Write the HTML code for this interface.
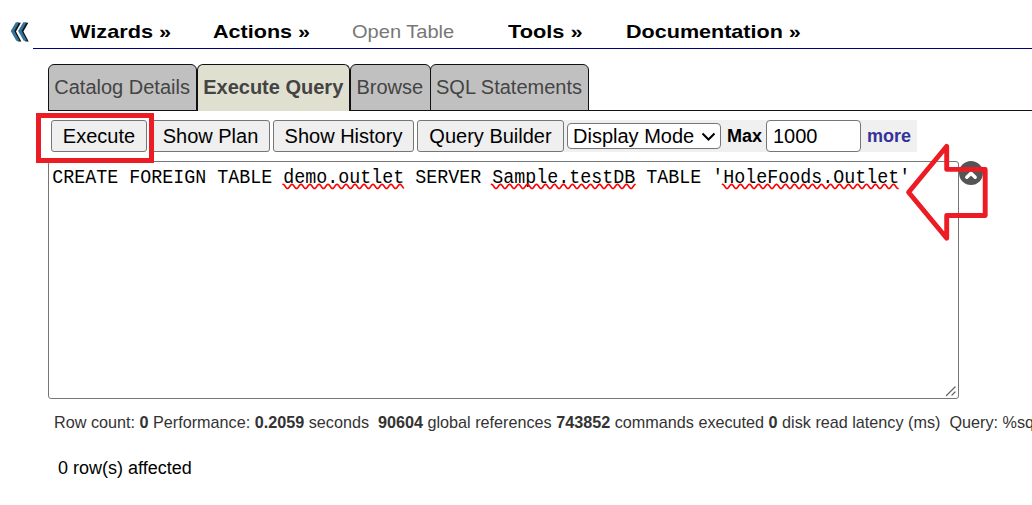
<!DOCTYPE html>
<html><head><meta charset="utf-8">
<style>
html,body{margin:0;padding:0;background:#fff;width:1032px;height:505px;overflow:hidden;position:relative;font-family:"Liberation Sans",sans-serif;}
.abs{position:absolute;}
.menu{position:absolute;top:18.7px;font-weight:bold;font-size:18.5px;color:#000;white-space:nowrap;transform-origin:0 0;line-height:26px;}
.menuline{position:absolute;left:33px;top:48px;width:999px;height:1px;background:#000080;}
.tab{position:absolute;top:64px;height:45px;border:1px solid #111;border-radius:6px 6px 0 0;background:#c0c0c0;color:#444;font-size:20px;line-height:45px;box-sizing:content-box;white-space:nowrap;}
.tabline{position:absolute;left:48px;top:110px;width:984px;height:1px;background:#111;}
.btn{position:absolute;top:120px;height:32px;box-sizing:border-box;border:1px solid #767676;border-radius:3px;background:#efefef;color:#000;font-size:20px;line-height:30px;white-space:nowrap;padding:0;text-align:center;}
.ta{position:absolute;left:48px;top:161px;width:909px;height:236px;border:1px solid #767676;border-radius:3px;background:#fff;}
.code{position:absolute;left:52.3px;top:167px;transform:scaleY(1.08);transform-origin:0 0;font-family:"Liberation Mono",monospace;font-size:18.333px;line-height:22px;color:#000;white-space:pre;}
.sp{text-decoration:underline wavy #e00;text-decoration-thickness:1px;text-underline-offset:3px;}
.stat{position:absolute;left:54px;top:413.3px;font-size:16.2px;color:#333;white-space:nowrap;line-height:18px;}
.stat b{color:#333;}
</style></head><body>
<!-- collapse icon -->
<svg class="abs" style="left:0;top:0" width="40" height="50" viewBox="0 0 40 50">
  <g fill="#111">
    <polygon points="17.6,22.8 20.9,22.8 16.0,31.6 21.3,41.4 18.0,41.4 12.4,31.6"/>
    <polygon points="25.0,22.8 28.3,22.8 23.4,31.6 28.7,41.4 25.4,41.4 19.8,31.6"/>
  </g>
  <g fill="#35739c">
    <polygon points="15.9,22.2 19.2,22.2 14.3,31.0 19.6,40.8 16.3,40.8 10.7,31.0"/>
    <polygon points="23.3,22.2 26.6,22.2 21.7,31.0 27.0,40.8 23.7,40.8 18.1,31.0"/>
  </g>
</svg>
<div class="menu" style="left:70px;transform:scaleX(1.172)">Wizards »</div>
<div class="menu" style="left:213px;transform:scaleX(1.166)">Actions »</div>
<div class="menu" style="left:352px;font-weight:normal;color:#777;transform:scaleX(1.084)">Open Table</div>
<div class="menu" style="left:508px;transform:scaleX(1.177)">Tools »</div>
<div class="menu" style="left:626px;transform:scaleX(1.165)">Documentation »</div>
<div class="menuline"></div>

<!-- tabs -->
<div class="tabline"></div>
<div class="tab" style="left:48px;width:147px;"><span style="position:relative;left:5.3px">Catalog Details</span></div>
<div class="tab" style="left:197px;width:151px;background:#e0e0d0;font-weight:bold;height:46px;border-bottom:none"><span style="position:relative;left:5.2px">Execute Query</span></div>
<div class="tab" style="left:350px;width:79px;"><span style="position:relative;left:5.5px">Browse</span></div>
<div class="tab" style="left:430px;width:157px;"><span style="padding-left:5px">SQL Statements</span></div>

<!-- toolbar -->
<div class="abs" style="left:564px;top:120px;width:353px;height:32px;background:#f0f0f0"></div>
<div class="btn" style="left:51px;width:96px">Execute</div>
<div class="btn" style="left:151px;width:119px">Show Plan</div>
<div class="btn" style="left:273px;width:141px">Show History</div>
<div class="btn" style="left:417px;width:147px">Query Builder</div>
<div class="abs" style="left:567px;top:123px;width:152px;height:24px;border:1px solid #767676;border-radius:4px;background:#fff;font-size:20px;line-height:24px;white-space:nowrap;">
  <span style="position:absolute;left:5px;top:0">Display Mode</span>
  <svg style="position:absolute;left:132.6px;top:7.5px" width="15" height="10" viewBox="0 0 15 10"><path d="M1.5 1.5 L7.5 7.5 L13.5 1.5" stroke="#000" stroke-width="2" fill="none"/></svg>
</div>
<div class="abs" style="left:727px;top:124px;font-size:18px;font-weight:bold;line-height:24px">Max</div>
<div class="abs" style="left:766px;top:120px;width:93px;height:30px;border:1px solid #767676;border-radius:4px;background:#fff;font-size:20px;line-height:30px;"><span style="position:absolute;left:6px">1000</span></div>
<div class="abs" style="left:867px;top:124px;font-size:18px;font-weight:bold;line-height:24px;color:#333399">more</div>

<!-- textarea -->
<div class="ta"></div>
<div class="code">CREATE FOREIGN TABLE demo.outlet SERVER Sample.testDB TABLE 'HoleFoods.Outlet'</div>
<svg class="abs" style="left:944px;top:384px" width="14" height="14" viewBox="0 0 14 14">
  <path d="M2.5 11.5 L11 3" stroke="#666" stroke-width="1.3" stroke-linecap="round"/>
  <path d="M8 11 L11 8" stroke="#666" stroke-width="1.3" stroke-linecap="round"/>
</svg>
<!-- waves -->
<svg class="abs" style="left:0;top:0" width="1032" height="505"><polyline points="283.0,184.30 283.5,184.43 284.0,184.79 284.5,185.35 285.0,186.04 285.5,186.76 286.0,187.45 286.5,188.01 287.0,188.37 287.5,188.50 288.0,188.37 288.5,188.01 289.0,187.45 289.5,186.76 290.0,186.04 290.5,185.35 291.0,184.79 291.5,184.43 292.0,184.30 292.5,184.43 293.0,184.79 293.5,185.35 294.0,186.04 294.5,186.76 295.0,187.45 295.5,188.01 296.0,188.37 296.5,188.50 297.0,188.37 297.5,188.01 298.0,187.45 298.5,186.76 299.0,186.04 299.5,185.35 300.0,184.79 300.5,184.43 301.0,184.30 301.5,184.43 302.0,184.79 302.5,185.35 303.0,186.04 303.5,186.76 304.0,187.45 304.5,188.01 305.0,188.37 305.5,188.50 306.0,188.37 306.5,188.01 307.0,187.45 307.5,186.76 308.0,186.04 308.5,185.35 309.0,184.79 309.5,184.43 310.0,184.30 310.5,184.43 311.0,184.79 311.5,185.35 312.0,186.04 312.5,186.76 313.0,187.45 313.5,188.01 314.0,188.37 314.5,188.50 315.0,188.37 315.5,188.01 316.0,187.45 316.5,186.76 317.0,186.04 317.5,185.35 318.0,184.79 318.5,184.43 319.0,184.30 319.5,184.43 320.0,184.79 320.5,185.35 321.0,186.04 321.5,186.76 322.0,187.45 322.5,188.01 323.0,188.37 323.5,188.50 324.0,188.37 324.5,188.01 325.0,187.45 325.5,186.76 326.0,186.04 326.5,185.35 327.0,184.79 327.5,184.43 328.0,184.30 328.5,184.43 329.0,184.79 329.5,185.35 330.0,186.04 330.5,186.76 331.0,187.45 331.5,188.01 332.0,188.37 332.5,188.50 333.0,188.37 333.5,188.01 334.0,187.45 334.5,186.76 335.0,186.04 335.5,185.35 336.0,184.79 336.5,184.43 337.0,184.30 337.5,184.43 338.0,184.79 338.5,185.35 339.0,186.04 339.5,186.76 340.0,187.45 340.5,188.01 341.0,188.37 341.5,188.50 342.0,188.37 342.5,188.01 343.0,187.45 343.5,186.76 344.0,186.04 344.5,185.35 345.0,184.79 345.5,184.43 346.0,184.30 346.5,184.43 347.0,184.79 347.5,185.35 348.0,186.04 348.5,186.76 349.0,187.45 349.5,188.01 350.0,188.37 350.5,188.50 351.0,188.37 351.5,188.01 352.0,187.45 352.5,186.76 353.0,186.04 353.5,185.35 354.0,184.79 354.5,184.43 355.0,184.30 355.5,184.43 356.0,184.79 356.5,185.35 357.0,186.04 357.5,186.76 358.0,187.45 358.5,188.01 359.0,188.37 359.5,188.50 360.0,188.37 360.5,188.01 361.0,187.45 361.5,186.76 362.0,186.04 362.5,185.35 363.0,184.79 363.5,184.43 364.0,184.30 364.5,184.43 365.0,184.79 365.5,185.35 366.0,186.04 366.5,186.76 367.0,187.45 367.5,188.01 368.0,188.37 368.5,188.50 369.0,188.37 369.5,188.01 370.0,187.45 370.5,186.76 371.0,186.04 371.5,185.35 372.0,184.79 372.5,184.43 373.0,184.30 373.5,184.43 374.0,184.79 374.5,185.35 375.0,186.04 375.5,186.76 376.0,187.45 376.5,188.01 377.0,188.37 377.5,188.50 378.0,188.37 378.5,188.01 379.0,187.45 379.5,186.76 380.0,186.04 380.5,185.35 381.0,184.79 381.5,184.43 382.0,184.30 382.5,184.43 383.0,184.79 383.5,185.35 384.0,186.04 384.5,186.76 385.0,187.45 385.5,188.01 386.0,188.37 386.5,188.50 387.0,188.37 387.5,188.01 388.0,187.45 388.5,186.76 389.0,186.04 389.5,185.35 390.0,184.79 390.5,184.43 391.0,184.30 391.5,184.43 392.0,184.79 392.5,185.35 393.0,186.04 393.5,186.76 394.0,187.45 394.5,188.01 395.0,188.37 395.5,188.50 396.0,188.37 396.5,188.01 397.0,187.45 397.5,186.76 398.0,186.04 398.5,185.35 399.0,184.79 399.5,184.43 400.0,184.30 400.5,184.43 401.0,184.79 401.5,185.35 402.0,186.04 402.5,186.76 403.0,187.45 403.5,188.01" fill="none" stroke="#ff0000" stroke-width="1.6" stroke-linecap="round" stroke-linejoin="round"/><polyline points="491.5,184.30 492.0,184.43 492.5,184.79 493.0,185.35 493.5,186.04 494.0,186.76 494.5,187.45 495.0,188.01 495.5,188.37 496.0,188.50 496.5,188.37 497.0,188.01 497.5,187.45 498.0,186.76 498.5,186.04 499.0,185.35 499.5,184.79 500.0,184.43 500.5,184.30 501.0,184.43 501.5,184.79 502.0,185.35 502.5,186.04 503.0,186.76 503.5,187.45 504.0,188.01 504.5,188.37 505.0,188.50 505.5,188.37 506.0,188.01 506.5,187.45 507.0,186.76 507.5,186.04 508.0,185.35 508.5,184.79 509.0,184.43 509.5,184.30 510.0,184.43 510.5,184.79 511.0,185.35 511.5,186.04 512.0,186.76 512.5,187.45 513.0,188.01 513.5,188.37 514.0,188.50 514.5,188.37 515.0,188.01 515.5,187.45 516.0,186.76 516.5,186.04 517.0,185.35 517.5,184.79 518.0,184.43 518.5,184.30 519.0,184.43 519.5,184.79 520.0,185.35 520.5,186.04 521.0,186.76 521.5,187.45 522.0,188.01 522.5,188.37 523.0,188.50 523.5,188.37 524.0,188.01 524.5,187.45 525.0,186.76 525.5,186.04 526.0,185.35 526.5,184.79 527.0,184.43 527.5,184.30 528.0,184.43 528.5,184.79 529.0,185.35 529.5,186.04 530.0,186.76 530.5,187.45 531.0,188.01 531.5,188.37 532.0,188.50 532.5,188.37 533.0,188.01 533.5,187.45 534.0,186.76 534.5,186.04 535.0,185.35 535.5,184.79 536.0,184.43 536.5,184.30 537.0,184.43 537.5,184.79 538.0,185.35 538.5,186.04 539.0,186.76 539.5,187.45 540.0,188.01 540.5,188.37 541.0,188.50 541.5,188.37 542.0,188.01 542.5,187.45 543.0,186.76 543.5,186.04 544.0,185.35 544.5,184.79 545.0,184.43 545.5,184.30 546.0,184.43 546.5,184.79 547.0,185.35 547.5,186.04 548.0,186.76 548.5,187.45 549.0,188.01 549.5,188.37 550.0,188.50 550.5,188.37 551.0,188.01 551.5,187.45 552.0,186.76 552.5,186.04 553.0,185.35 553.5,184.79 554.0,184.43 554.5,184.30 555.0,184.43 555.5,184.79 556.0,185.35 556.5,186.04 557.0,186.76 557.5,187.45 558.0,188.01 558.5,188.37 559.0,188.50 559.5,188.37 560.0,188.01 560.5,187.45 561.0,186.76 561.5,186.04 562.0,185.35 562.5,184.79 563.0,184.43 563.5,184.30 564.0,184.43 564.5,184.79 565.0,185.35 565.5,186.04 566.0,186.76 566.5,187.45 567.0,188.01 567.5,188.37 568.0,188.50 568.5,188.37 569.0,188.01 569.5,187.45 570.0,186.76 570.5,186.04 571.0,185.35 571.5,184.79 572.0,184.43 572.5,184.30 573.0,184.43 573.5,184.79 574.0,185.35 574.5,186.04 575.0,186.76 575.5,187.45 576.0,188.01 576.5,188.37 577.0,188.50 577.5,188.37 578.0,188.01 578.5,187.45 579.0,186.76 579.5,186.04 580.0,185.35 580.5,184.79 581.0,184.43 581.5,184.30 582.0,184.43 582.5,184.79 583.0,185.35 583.5,186.04 584.0,186.76 584.5,187.45 585.0,188.01 585.5,188.37 586.0,188.50 586.5,188.37 587.0,188.01 587.5,187.45 588.0,186.76 588.5,186.04 589.0,185.35 589.5,184.79 590.0,184.43 590.5,184.30 591.0,184.43 591.5,184.79 592.0,185.35 592.5,186.04 593.0,186.76 593.5,187.45 594.0,188.01 594.5,188.37 595.0,188.50 595.5,188.37 596.0,188.01 596.5,187.45 597.0,186.76 597.5,186.04 598.0,185.35 598.5,184.79 599.0,184.43 599.5,184.30 600.0,184.43 600.5,184.79 601.0,185.35 601.5,186.04 602.0,186.76 602.5,187.45 603.0,188.01 603.5,188.37 604.0,188.50 604.5,188.37 605.0,188.01 605.5,187.45 606.0,186.76 606.5,186.04 607.0,185.35 607.5,184.79 608.0,184.43 608.5,184.30 609.0,184.43 609.5,184.79 610.0,185.35 610.5,186.04 611.0,186.76 611.5,187.45 612.0,188.01 612.5,188.37 613.0,188.50 613.5,188.37 614.0,188.01 614.5,187.45 615.0,186.76 615.5,186.04 616.0,185.35 616.5,184.79 617.0,184.43 617.5,184.30 618.0,184.43 618.5,184.79 619.0,185.35 619.5,186.04 620.0,186.76 620.5,187.45 621.0,188.01 621.5,188.37 622.0,188.50 622.5,188.37 623.0,188.01 623.5,187.45 624.0,186.76 624.5,186.04 625.0,185.35 625.5,184.79 626.0,184.43 626.5,184.30 627.0,184.43 627.5,184.79 628.0,185.35 628.5,186.04 629.0,186.76 629.5,187.45 630.0,188.01 630.5,188.37 631.0,188.50 631.5,188.37 632.0,188.01 632.5,187.45 633.0,186.76 633.5,186.04 634.0,185.35 634.5,184.79 635.0,184.43" fill="none" stroke="#ff0000" stroke-width="1.6" stroke-linecap="round" stroke-linejoin="round"/><polyline points="722.5,184.30 723.0,184.43 723.5,184.79 724.0,185.35 724.5,186.04 725.0,186.76 725.5,187.45 726.0,188.01 726.5,188.37 727.0,188.50 727.5,188.37 728.0,188.01 728.5,187.45 729.0,186.76 729.5,186.04 730.0,185.35 730.5,184.79 731.0,184.43 731.5,184.30 732.0,184.43 732.5,184.79 733.0,185.35 733.5,186.04 734.0,186.76 734.5,187.45 735.0,188.01 735.5,188.37 736.0,188.50 736.5,188.37 737.0,188.01 737.5,187.45 738.0,186.76 738.5,186.04 739.0,185.35 739.5,184.79 740.0,184.43 740.5,184.30 741.0,184.43 741.5,184.79 742.0,185.35 742.5,186.04 743.0,186.76 743.5,187.45 744.0,188.01 744.5,188.37 745.0,188.50 745.5,188.37 746.0,188.01 746.5,187.45 747.0,186.76 747.5,186.04 748.0,185.35 748.5,184.79 749.0,184.43 749.5,184.30 750.0,184.43 750.5,184.79 751.0,185.35 751.5,186.04 752.0,186.76 752.5,187.45 753.0,188.01 753.5,188.37 754.0,188.50 754.5,188.37 755.0,188.01 755.5,187.45 756.0,186.76 756.5,186.04 757.0,185.35 757.5,184.79 758.0,184.43 758.5,184.30 759.0,184.43 759.5,184.79 760.0,185.35 760.5,186.04 761.0,186.76 761.5,187.45 762.0,188.01 762.5,188.37 763.0,188.50 763.5,188.37 764.0,188.01 764.5,187.45 765.0,186.76 765.5,186.04 766.0,185.35 766.5,184.79 767.0,184.43 767.5,184.30 768.0,184.43 768.5,184.79 769.0,185.35 769.5,186.04 770.0,186.76 770.5,187.45 771.0,188.01 771.5,188.37 772.0,188.50 772.5,188.37 773.0,188.01 773.5,187.45 774.0,186.76 774.5,186.04 775.0,185.35 775.5,184.79 776.0,184.43 776.5,184.30 777.0,184.43 777.5,184.79 778.0,185.35 778.5,186.04 779.0,186.76 779.5,187.45 780.0,188.01 780.5,188.37 781.0,188.50 781.5,188.37 782.0,188.01 782.5,187.45 783.0,186.76 783.5,186.04 784.0,185.35 784.5,184.79 785.0,184.43 785.5,184.30 786.0,184.43 786.5,184.79 787.0,185.35 787.5,186.04 788.0,186.76 788.5,187.45 789.0,188.01 789.5,188.37 790.0,188.50 790.5,188.37 791.0,188.01 791.5,187.45 792.0,186.76 792.5,186.04 793.0,185.35 793.5,184.79 794.0,184.43 794.5,184.30 795.0,184.43 795.5,184.79 796.0,185.35 796.5,186.04 797.0,186.76 797.5,187.45 798.0,188.01 798.5,188.37 799.0,188.50 799.5,188.37 800.0,188.01 800.5,187.45 801.0,186.76 801.5,186.04 802.0,185.35 802.5,184.79 803.0,184.43 803.5,184.30 804.0,184.43 804.5,184.79 805.0,185.35 805.5,186.04 806.0,186.76 806.5,187.45 807.0,188.01 807.5,188.37 808.0,188.50 808.5,188.37 809.0,188.01 809.5,187.45 810.0,186.76 810.5,186.04 811.0,185.35 811.5,184.79 812.0,184.43 812.5,184.30 813.0,184.43 813.5,184.79 814.0,185.35 814.5,186.04 815.0,186.76 815.5,187.45 816.0,188.01 816.5,188.37 817.0,188.50 817.5,188.37 818.0,188.01 818.5,187.45 819.0,186.76 819.5,186.04 820.0,185.35 820.5,184.79 821.0,184.43 821.5,184.30 822.0,184.43 822.5,184.79 823.0,185.35 823.5,186.04 824.0,186.76 824.5,187.45 825.0,188.01 825.5,188.37 826.0,188.50 826.5,188.37 827.0,188.01 827.5,187.45 828.0,186.76 828.5,186.04 829.0,185.35 829.5,184.79 830.0,184.43 830.5,184.30 831.0,184.43 831.5,184.79 832.0,185.35 832.5,186.04 833.0,186.76 833.5,187.45 834.0,188.01 834.5,188.37 835.0,188.50 835.5,188.37 836.0,188.01 836.5,187.45 837.0,186.76 837.5,186.04 838.0,185.35 838.5,184.79 839.0,184.43 839.5,184.30 840.0,184.43 840.5,184.79 841.0,185.35 841.5,186.04 842.0,186.76 842.5,187.45 843.0,188.01 843.5,188.37 844.0,188.50 844.5,188.37 845.0,188.01 845.5,187.45 846.0,186.76 846.5,186.04 847.0,185.35 847.5,184.79 848.0,184.43 848.5,184.30 849.0,184.43 849.5,184.79 850.0,185.35 850.5,186.04 851.0,186.76 851.5,187.45 852.0,188.01 852.5,188.37 853.0,188.50 853.5,188.37 854.0,188.01 854.5,187.45 855.0,186.76 855.5,186.04 856.0,185.35 856.5,184.79 857.0,184.43 857.5,184.30 858.0,184.43 858.5,184.79 859.0,185.35 859.5,186.04 860.0,186.76 860.5,187.45 861.0,188.01 861.5,188.37 862.0,188.50 862.5,188.37 863.0,188.01 863.5,187.45 864.0,186.76 864.5,186.04 865.0,185.35 865.5,184.79 866.0,184.43 866.5,184.30 867.0,184.43 867.5,184.79 868.0,185.35 868.5,186.04 869.0,186.76 869.5,187.45 870.0,188.01 870.5,188.37 871.0,188.50 871.5,188.37 872.0,188.01 872.5,187.45 873.0,186.76 873.5,186.04 874.0,185.35 874.5,184.79 875.0,184.43 875.5,184.30 876.0,184.43 876.5,184.79 877.0,185.35 877.5,186.04 878.0,186.76 878.5,187.45 879.0,188.01 879.5,188.37 880.0,188.50 880.5,188.37 881.0,188.01 881.5,187.45 882.0,186.76 882.5,186.04 883.0,185.35 883.5,184.79 884.0,184.43 884.5,184.30 885.0,184.43 885.5,184.79 886.0,185.35 886.5,186.04 887.0,186.76 887.5,187.45 888.0,188.01 888.5,188.37 889.0,188.50 889.5,188.37 890.0,188.01 890.5,187.45 891.0,186.76 891.5,186.04 892.0,185.35 892.5,184.79 893.0,184.43 893.5,184.30 894.0,184.43 894.5,184.79 895.0,185.35 895.5,186.04 896.0,186.76 896.5,187.45 897.0,188.01 897.5,188.37 898.0,188.50" fill="none" stroke="#ff0000" stroke-width="1.6" stroke-linecap="round" stroke-linejoin="round"/></svg>
<!-- close circle -->
<svg class="abs" style="left:959px;top:161px" width="24" height="24" viewBox="0 0 24 24">
  <circle cx="12" cy="12" r="12" fill="#555"/>
  <path d="M7.8 16.3 L12 12.2 L16.2 16.3" stroke="#fff" stroke-width="3.4" fill="none" stroke-linecap="round" stroke-linejoin="round"/>
</svg>

<!-- red highlight box -->
<div class="abs" style="left:36px;top:113px;width:108px;height:40px;border:5px solid #ec1c24;"></div>
<!-- red arrow -->
<svg class="abs" style="left:0;top:0" width="1032" height="505">
  <polygon points="908.6,192.3 946.7,146.3 946.7,169.4 985.2,169.4 985.2,215.5 946.7,215.5 946.7,238.2" fill="none" stroke="#ed1c24" stroke-width="4.9" stroke-linejoin="round"/>
</svg>

<div class="stat">Row count: <b>0</b> Performance: <b>0.2059</b> seconds&nbsp; <b>90604</b> global references <b>743852</b> commands executed <b>0</b> disk read latency (ms)&nbsp; Query: %sql</div>
<div class="abs" style="left:58px;top:457.7px;font-size:18px;color:#000;line-height:20px;white-space:nowrap">0 row(s) affected</div>
</body></html>
